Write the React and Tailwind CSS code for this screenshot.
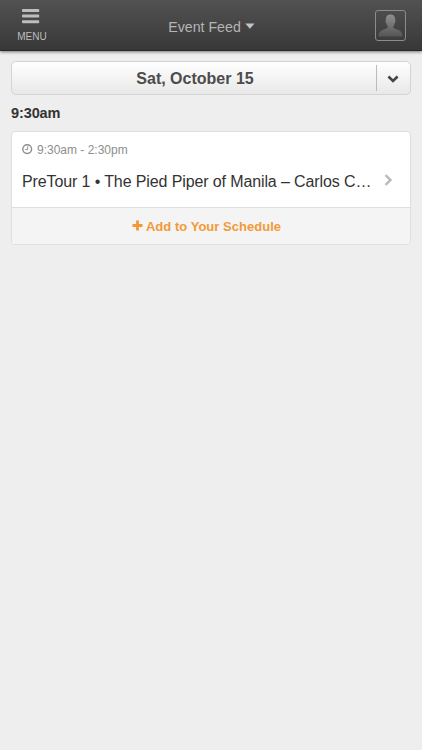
const events = [
  {
    time: "9:30am - 2:30pm",
    title: "PreTour 1 • The Pied Piper of Manila – Carlos C…",
  },
];

function MenuIcon() {
  return (
    <svg className="block" width="18" height="16" viewBox="0 0 18 16" fill="#bdbdbd">
      <rect x="0" y="1" width="17.2" height="3" rx="0.8" />
      <rect x="0" y="6.6" width="17.2" height="3" rx="0.8" />
      <rect x="0" y="12.3" width="17.2" height="3" rx="0.8" />
    </svg>
  );
}

function PersonIcon() {
  return (
    <svg className="block" width="25" height="23" viewBox="0 0 25 23">
      <defs>
        <linearGradient id="person" x1="0" y1="0" x2="0" y2="1">
          <stop offset="0" stopColor="#909090" />
          <stop offset="1" stopColor="#555" />
        </linearGradient>
      </defs>
      <path
        fill="url(#person)"
        d="M12.500 0.500c3 0 4.700 1.900 4.700 4.700v1.200c.6.200.5 1.700-.3 2.300-.3 1.600-.9 2.700-1.600 3.500v1.300c.8 1.200 2.800 1.600 5.300 2.500 2.700 1 3.800 3.200 3.900 6.500H.5c.1-3.300 1.200-5.500 3.900-6.500 2.500-.9 4.500-1.300 5.300-2.500v-1.300c-.7-.8-1.300-1.900-1.600-3.500-.8-.6-.9-2.100-.3-2.300V5.200c0-2.800 1.700-4.700 4.700-4.700z"
      />
    </svg>
  );
}

function ClockIcon() {
  return (
    <svg className="mb-0.5 block" width="11" height="11" viewBox="0 0 11 11" fill="none" stroke="#8e8e8e">
      <circle cx="5.2" cy="5.1" r="4.4" strokeWidth="1.4" />
      <path d="M5.700 2.300v3.300H3.200" strokeWidth="1" />
    </svg>
  );
}

function Header() {
  return (
    <header className="flex h-[51px] justify-between border-b border-[#2a2829] bg-linear-to-b from-[#525252] to-[#383838] shadow-[0_1px_3px_rgba(0,0,0,0.5)]">
      <button className="flex w-16 flex-col items-center pt-2">
        <div className="pr-0.5">
          <MenuIcon />
        </div>
        <span className="mt-[7px] text-[10px] leading-3 text-[#bdbdbd]">MENU</span>
      </button>
      <button className="flex items-center pb-px pl-px text-[#b5b5b5]">
        <span className="pt-1 text-[14.2px] leading-5">Event Feed</span>
        <svg className="mt-[3px] ml-1" width="10" height="6" viewBox="0 0 10 6">
          <path d="M0.300 0.400h9.200L4.900 5.700z" fill="#c4c4c4" />
        </svg>
      </button>
      <div className="flex w-16 justify-end pt-[10px] pr-4">
        <button className="flex h-[31px] w-[31px] items-end justify-center rounded-[3px] border border-[#8c8c8c] pb-[3px]">
          <PersonIcon />
        </button>
      </div>
    </header>
  );
}

function DayPicker() {
  return (
    <div className="flex h-[34px] items-center rounded-[5px] border border-[#d3d3d3] bg-linear-to-b from-white to-[#e8e8e8]">
      <span className="flex-1 pt-0.5 pl-0.5 text-center text-base font-bold text-[#4c4c4c]">Sat, October 15</span>
      <button className="flex h-[26px] w-[34px] items-center justify-center border-l border-[#bcbcbc] pr-px">
        <svg className="mt-px" width="12" height="8" viewBox="0 0 12 8">
          <path d="M1.400 1.500L6 6l4.600-4.500" fill="none" stroke="#444" strokeWidth="2.600" />
        </svg>
      </button>
    </div>
  );
}

function EventCard({ event }) {
  return (
    <div className="overflow-hidden rounded-[4px] border border-[#dedede] bg-white">
      <div className="h-[75px] px-[10px] pt-[10px]">
        <div className="flex items-center text-[#8e8e8e]">
          <ClockIcon />
          <span className="ml-1 text-[12px] leading-4">{event.time}</span>
        </div>
        <div className="mt-3 flex items-center justify-between">
          <span className="text-base tracking-[-0.115px] whitespace-nowrap text-[#333]">{event.title}</span>
          <svg className="mr-[7px] mb-1" width="9" height="12" viewBox="0 0 9 12">
            <path d="M1.500 1.200L6.500 6l-5 4.800" fill="none" stroke="#bcbcbc" strokeWidth="2.500" />
          </svg>
        </div>
      </div>
      <button className="flex h-[37px] w-full items-center justify-center border-t border-[#dedede] bg-[#f4f4f4] pr-[9px] text-[#f29a38]">
        <svg className="mb-0.5" width="11" height="11" viewBox="0 0 11 11">
          <path d="M5.500 0.500v10M0.500 5.500h10" stroke="currentColor" strokeWidth="2.800" />
        </svg>
        <span className="ml-[3px] pt-px text-[13px] font-bold tracking-[0.030px]">Add to Your Schedule</span>
      </button>
    </div>
  );
}

export default function App() {
  return (
    <div className="min-h-screen bg-[#eeeeee] font-['Liberation_Sans',Arial,sans-serif]">
      <Header />
      <main className="px-[11px] pt-[10px]">
        <DayPicker />
        <h2 className="mt-2 mb-2 text-[14.5px] leading-5 font-bold tracking-[-0.1px] text-[#333]">9:30am</h2>
        {events.map((event) => (
          <EventCard key={event.title} event={event} />
        ))}
      </main>
    </div>
  );
}
